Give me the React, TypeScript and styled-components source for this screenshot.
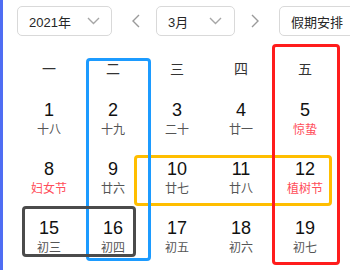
import React from "react";
import styled, { createGlobalStyle } from "styled-components";

const GlobalStyle = createGlobalStyle`
  html, body {
    margin: 0;
    padding: 0;
    background: #fff;
    overflow: hidden;
  }
  body {
    font-family: "Liberation Sans", "Noto Sans CJK SC", sans-serif;
  }
`;

interface DayCell {
  day: number;
  lunar: string;
  festival?: boolean;
}

// only Mon-Fri fit into the frame
const weekdays = ["一", "二", "三", "四", "五"];

const weeks: DayCell[][] = [
  [
    { day: 1, lunar: "十八" },
    { day: 2, lunar: "十九" },
    { day: 3, lunar: "二十" },
    { day: 4, lunar: "廿一" },
    { day: 5, lunar: "惊蛰", festival: true },
  ],
  [
    { day: 8, lunar: "妇女节", festival: true },
    { day: 9, lunar: "廿六" },
    { day: 10, lunar: "廿七" },
    { day: 11, lunar: "廿八" },
    { day: 12, lunar: "植树节", festival: true },
  ],
  [
    { day: 15, lunar: "初三" },
    { day: 16, lunar: "初四" },
    { day: 17, lunar: "初五" },
    { day: 18, lunar: "初六" },
    { day: 19, lunar: "初七" },
  ],
];

const marks = [
  { id: "yellow", color: "#ffbe00", left: 134, top: 155, width: 198, height: 51 },
  { id: "blue", color: "#1c9bff", left: 86, top: 58, width: 65, height: 203 },
  { id: "dark", color: "#4b4b4b", left: 22, top: 206, width: 114, height: 51 },
  { id: "red", color: "#ff1c1c", left: 272, top: 44, width: 68, height: 221 },
];

const Page = styled.div`
  position: relative;
  height: 270px;
  border-left: 3px solid #4f6df3;
  padding: 6px 0 0 14px;
  box-sizing: border-box;
`;

const Toolbar = styled.div`
  display: flex;
  align-items: center;
  height: 30px;
`;

const Select = styled.div<{ $width: number; $pad: number }>`
  display: flex;
  align-items: center;
  justify-content: space-between;
  flex-shrink: 0;
  box-sizing: border-box;
  width: ${(p) => p.$width}px;
  height: 30px;
  padding: 0 ${(p) => p.$pad}px 0 11px;
  border: 1px solid #d9d9d9;
  border-radius: 5px;
  background: #fff;
  font-size: 13px;
  color: #262626;
`;

const ArrowButton = styled.div<{ $left: number; $right: number }>`
  display: flex;
  align-items: center;
  justify-content: center;
  flex-shrink: 0;
  width: 20px;
  height: 30px;
  margin: 0 ${(p) => p.$right}px 0 ${(p) => p.$left}px;
`;

const Grid = styled.div`
  display: grid;
  grid-template-columns: repeat(5, 64px);
  width: 320px;
`;

const WeekdayCell = styled.div`
  height: 36px;
  margin-top: 14px;
  display: flex;
  align-items: center;
  justify-content: center;
  font-size: 14px;
  color: #333;
`;

const DateRows = styled(Grid)`
  margin-top: 4px;
  grid-auto-rows: 59px;
`;

const Cell = styled.div`
  display: flex;
  flex-direction: column;
  align-items: center;
  justify-content: center;
`;

const Day = styled.div`
  font-size: 18px;
  line-height: 21px;
  color: #111;
`;

const Lunar = styled.div<{ $festival?: boolean }>`
  font-size: 12px;
  line-height: 18px;
  color: ${(p) => (p.$festival ? "#ff4d5a" : "#555")};
`;

const Mark = styled.div<{ $color: string }>`
  position: absolute;
  box-sizing: border-box;
  border: 3px solid ${(p) => p.$color};
  border-radius: 4px;
  pointer-events: none;
`;

const Chevron = () => (
  <svg width="13" height="8" viewBox="0 0 13 8">
    <polyline points="1,1 6.5,6.5 12,1" fill="none" stroke="#a6a6a6" strokeWidth="1.4" />
  </svg>
);

const Arrow = ({ dir }: { dir: "left" | "right" }) => (
  <svg width="8" height="14" viewBox="0 0 8 14">
    <polyline
      points={dir === "left" ? "7,1 1,7 7,13" : "1,1 7,7 1,13"}
      fill="none"
      stroke="#9a9a9a"
      strokeWidth="1.4"
    />
  </svg>
);

export default function App() {
  return (
    <>
      <GlobalStyle />
      <Page>
        <Toolbar>
          <Select $width={95} $pad={11}>
            <span>2021年</span>
            <Chevron />
          </Select>
          <ArrowButton $left={14} $right={10}>
            <Arrow dir="left" />
          </ArrowButton>
          <Select $width={79} $pad={12}>
            <span>3月</span>
            <Chevron />
          </Select>
          <ArrowButton $left={10} $right={14}>
            <Arrow dir="right" />
          </ArrowButton>
          <Select $width={100} $pad={11}>
            <span>假期安排</span>
            <Chevron />
          </Select>
        </Toolbar>
        <Grid>
          {weekdays.map((w) => (
            <WeekdayCell key={w}>{w}</WeekdayCell>
          ))}
        </Grid>
        <DateRows>
          {weeks.flat().map((c) => (
            <Cell key={c.day}>
              <Day>{c.day}</Day>
              <Lunar $festival={c.festival}>{c.lunar}</Lunar>
            </Cell>
          ))}
        </DateRows>
        {marks.map((m) => (
          <Mark
            key={m.id}
            $color={m.color}
            style={{ left: m.left - 3, top: m.top, width: m.width, height: m.height }}
          />
        ))}
      </Page>
    </>
  );
}
